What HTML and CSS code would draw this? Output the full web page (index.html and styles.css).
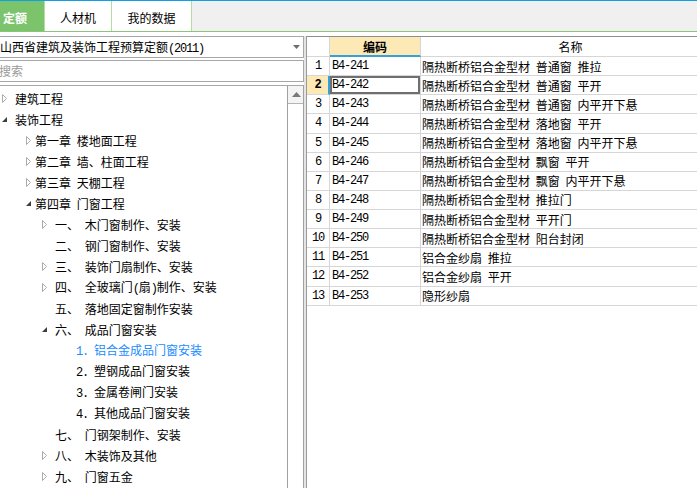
FILE: index.html
```html
<!DOCTYPE html>
<html lang="zh-CN">
<head>
<meta charset="utf-8">
<title>定额</title>
<link rel="stylesheet" href="styles.css">
</head>
<body>
<div class="app">
  <div class="tabbar">
    <div class="tab active">定额</div>
    <div class="tab t2">人材机</div>
    <div class="tab t3">我的数据</div>
  </div>
  <div class="main">
    <div class="left">
      <div class="dropdown">
        <span class="dd-text">山西省建筑及装饰工程预算定额<span class="latin">(2011)</span></span>
        <svg class="caret" width="7" height="4" viewBox="0 0 7 4"><path d="M0 0H7L3.5 4Z" fill="#6d6d6d"/></svg>
      </div>
      <div class="search">搜索</div>
      <div class="tree">
        <ul class="tree-list">
          <li class="node l0"><span class="arrow"><svg width="5" height="9" viewBox="0 0 5 9"><path d="M0.5 0.5V8.5L4.5 4.5Z" fill="#fff" stroke="#ababab"/></svg></span><span>建筑工程</span></li>
          <li class="node l0"><span class="arrow"><svg width="5" height="5" viewBox="0 0 5 5"><path d="M5 0V5H0Z" fill="#3c3c3c"/></svg></span><span>装饰工程</span></li>
          <li class="node l1"><span class="arrow"><svg width="5" height="9" viewBox="0 0 5 9"><path d="M0.5 0.5V8.5L4.5 4.5Z" fill="#fff" stroke="#ababab"/></svg></span><span>第一章 楼地面工程</span></li>
          <li class="node l1"><span class="arrow"><svg width="5" height="9" viewBox="0 0 5 9"><path d="M0.5 0.5V8.5L4.5 4.5Z" fill="#fff" stroke="#ababab"/></svg></span><span>第二章 墙、柱面工程</span></li>
          <li class="node l1"><span class="arrow"><svg width="5" height="9" viewBox="0 0 5 9"><path d="M0.5 0.5V8.5L4.5 4.5Z" fill="#fff" stroke="#ababab"/></svg></span><span>第三章 天棚工程</span></li>
          <li class="node l1"><span class="arrow"><svg width="5" height="5" viewBox="0 0 5 5"><path d="M5 0V5H0Z" fill="#3c3c3c"/></svg></span><span>第四章 门窗工程</span></li>
          <li class="node l2"><span class="arrow"><svg width="5" height="9" viewBox="0 0 5 9"><path d="M0.5 0.5V8.5L4.5 4.5Z" fill="#fff" stroke="#ababab"/></svg></span><span>一、 木门窗制作、安装</span></li>
          <li class="node l2"><span class="arrow"></span><span>二、 钢门窗制作、安装</span></li>
          <li class="node l2"><span class="arrow"><svg width="5" height="9" viewBox="0 0 5 9"><path d="M0.5 0.5V8.5L4.5 4.5Z" fill="#fff" stroke="#ababab"/></svg></span><span>三、 装饰门扇制作、安装</span></li>
          <li class="node l2"><span class="arrow"><svg width="5" height="9" viewBox="0 0 5 9"><path d="M0.5 0.5V8.5L4.5 4.5Z" fill="#fff" stroke="#ababab"/></svg></span><span>四、 全玻璃门<span class="latin">(</span>扇<span class="latin">)</span>制作、安装</span></li>
          <li class="node l2"><span class="arrow"></span><span>五、 落地固定窗制作安装</span></li>
          <li class="node l2"><span class="arrow"><svg width="5" height="5" viewBox="0 0 5 5"><path d="M5 0V5H0Z" fill="#3c3c3c"/></svg></span><span>六、 成品门窗安装</span></li>
          <li class="node l3 selected"><span class="arrow"></span><span><span class="latin">1. </span>铝合金成品门窗安装</span></li>
          <li class="node l3"><span class="arrow"></span><span><span class="latin">2. </span>塑钢成品门窗安装</span></li>
          <li class="node l3"><span class="arrow"></span><span><span class="latin">3. </span>金属卷闸门安装</span></li>
          <li class="node l3"><span class="arrow"></span><span><span class="latin">4. </span>其他成品门窗安装</span></li>
          <li class="node l2"><span class="arrow"></span><span>七、 门钢架制作、安装</span></li>
          <li class="node l2"><span class="arrow"><svg width="5" height="9" viewBox="0 0 5 9"><path d="M0.5 0.5V8.5L4.5 4.5Z" fill="#fff" stroke="#ababab"/></svg></span><span>八、 木装饰及其他</span></li>
          <li class="node l2"><span class="arrow"><svg width="5" height="9" viewBox="0 0 5 9"><path d="M0.5 0.5V8.5L4.5 4.5Z" fill="#fff" stroke="#ababab"/></svg></span><span>九、 门窗五金</span></li>
        </ul>
        <div class="vscroll">
          <div class="vbtn"><svg width="9" height="5" viewBox="0 0 9 5"><path d="M0 5H9L4.5 0Z" fill="#7a7a7a"/></svg></div>
        </div>
      </div>
    </div>
    <div class="splitter"></div>
    <div class="right">
      <div class="grid">
        <div class="grow head">
          <div class="cell num"></div>
          <div class="cell code-h">编码</div>
          <div class="cell name-h">名称</div>
        </div>
        <div class="grow"><div class="cell num">1</div><div class="cell code">B4-241</div><div class="cell name">隔热断桥铝合金型材 普通窗 推拉</div></div>
        <div class="grow cur"><div class="cell num">2</div><div class="cell code focus">B4-242</div><div class="cell name">隔热断桥铝合金型材 普通窗 平开</div></div>
        <div class="grow"><div class="cell num">3</div><div class="cell code">B4-243</div><div class="cell name">隔热断桥铝合金型材 普通窗 内平开下悬</div></div>
        <div class="grow"><div class="cell num">4</div><div class="cell code">B4-244</div><div class="cell name">隔热断桥铝合金型材 落地窗 平开</div></div>
        <div class="grow"><div class="cell num">5</div><div class="cell code">B4-245</div><div class="cell name">隔热断桥铝合金型材 落地窗 内平开下悬</div></div>
        <div class="grow"><div class="cell num">6</div><div class="cell code">B4-246</div><div class="cell name">隔热断桥铝合金型材 飘窗 平开</div></div>
        <div class="grow"><div class="cell num">7</div><div class="cell code">B4-247</div><div class="cell name">隔热断桥铝合金型材 飘窗 内平开下悬</div></div>
        <div class="grow"><div class="cell num">8</div><div class="cell code">B4-248</div><div class="cell name">隔热断桥铝合金型材 推拉门</div></div>
        <div class="grow"><div class="cell num">9</div><div class="cell code">B4-249</div><div class="cell name">隔热断桥铝合金型材 平开门</div></div>
        <div class="grow"><div class="cell num">10</div><div class="cell code">B4-250</div><div class="cell name">隔热断桥铝合金型材 阳台封闭</div></div>
        <div class="grow"><div class="cell num">11</div><div class="cell code">B4-251</div><div class="cell name">铝合金纱扇 推拉</div></div>
        <div class="grow"><div class="cell num">12</div><div class="cell code">B4-252</div><div class="cell name">铝合金纱扇 平开</div></div>
        <div class="grow"><div class="cell num">13</div><div class="cell code">B4-253</div><div class="cell name">隐形纱扇</div></div>
      </div>
    </div>
  </div>
</div>
</body>
</html>
```
FILE: styles.css
```css
* { box-sizing: border-box; }
html, body { margin: 0; padding: 0; }
body {
  width: 697px;
  height: 488px;
  overflow: hidden;
  background: #fff;
  font-family: "Noto Sans CJK SC", "Noto Sans", sans-serif;
  font-size: 12px;
  color: #000;
  word-spacing: 3px;
}
.app { display: flex; flex-direction: column; height: 488px; }

.latin {
  font-family: "Liberation Mono", monospace;
  font-size: 12px;
  letter-spacing: -1.2px;
  word-spacing: 0;
}

/* tabs */
.tabbar {
  flex: none;
  display: flex;
  height: 32px;
  background: #f0f0f0;
  border-top: 1px solid #12a0e4;
  border-bottom: 1px solid #8cc47b;
}
.tab {
  height: 30px;
  padding-top: 4px;
  line-height: 26px;
  background: #fff;
  border-right: 1px solid #b3dca6;
  text-align: center;
}
.tab.active {
  width: 45px;
  background: #7cc46b;
  color: #fff;
  font-weight: bold;
  text-align: left;
  padding-left: 3px;
}
.tab.t2 { width: 67px; }
.tab.t3 { width: 80px; }

/* main */
.main {
  flex: 1;
  min-height: 0;
  display: flex;
  padding-top: 4px;
}
.left {
  flex: none;
  width: 314px;
  margin-left: -10px;
  display: flex;
  flex-direction: column;
}
.dropdown {
  flex: none;
  height: 22px;
  border: 1px solid #a7a7a7;
  display: flex;
  align-items: center;
  padding-left: 9px;
  padding-right: 3px;
  white-space: nowrap;
}
.dd-text { flex: 1; }
.caret { flex: none; }
.search {
  flex: none;
  height: 22px;
  margin-top: 2px;
  border: 1px solid #a7a7a7;
  padding-left: 8px;
  line-height: 20px;
  color: #9a9a9a;
}
.tree {
  flex: 1;
  min-height: 0;
  margin-top: 3px;
  border-top: 1px solid #a7a7a7;
  border-right: 1px solid #a0a0a0;
  display: flex;
}
.tree-list {
  flex: 1;
  margin: 0;
  padding: 2px 0 0 0;
  list-style: none;
  overflow: hidden;
}
.node {
  height: 21px;
  line-height: 21px;
  display: flex;
  align-items: center;
  white-space: nowrap;
}
.arrow {
  flex: none;
  width: 13px;
  height: 21px;
  display: flex;
  align-items: center;
}
.l0 { padding-left: 12px; }
.l1 { padding-left: 32px; }
.l1 .arrow { padding-left: 4px; }
.l2 { padding-left: 52px; }
.l3 { padding-left: 73px; }
.node.selected { color: #1a8cff; }

.vscroll {
  flex: none;
  width: 16px;
  border-left: 1px solid #a0a0a0;
  background: #fff;
}
.vbtn {
  height: 18px;
  border-bottom: 1px solid #b4b4b4;
  background: #f4f4f4;
  display: flex;
  align-items: center;
  justify-content: center;
  padding-left: 1px;
}

.splitter {
  flex: none;
  width: 2px;
  background: #e4e4e4;
}

/* grid */
.right {
  flex: 1;
  min-width: 0;
  overflow: hidden;
  border-left: 1px solid #9a9a9a;
  border-top: 1px solid #8d8d8d;
}
.grid { width: 414px; }
.grow {
  display: grid;
  grid-template-columns: 23px 91px 300px;
  height: 19.14px;
}
.grow.head { height: 20px; }
.cell {
  border-right: 1px solid #d6d6d6;
  border-bottom: 1px solid #d6d6d6;
  white-space: nowrap;
  overflow: hidden;
  display: flex;
  align-items: center;
}
.head .cell { justify-content: center; }
.code-h {
  background: #fde9b6;
  font-weight: bold;
  border-bottom: 2px solid #36a0d8;
}
.num {
  justify-content: center;
  font-family: "Liberation Mono", monospace;
  font-size: 12px;
  letter-spacing: -1.2px;
  word-spacing: 0;
}
.code {
  padding-left: 2px;
  font-family: "Liberation Mono", monospace;
  font-size: 12px;
  letter-spacing: -1.2px;
  word-spacing: 0;
}
.name { padding-left: 1px; }
.cur .num {
  background: #fde9b6;
  font-weight: bold;
  border-right: 2px solid #36a0d8;
}
.code.focus {
  box-shadow: inset 0 0 0 2px #6f6f6f;
}
```
